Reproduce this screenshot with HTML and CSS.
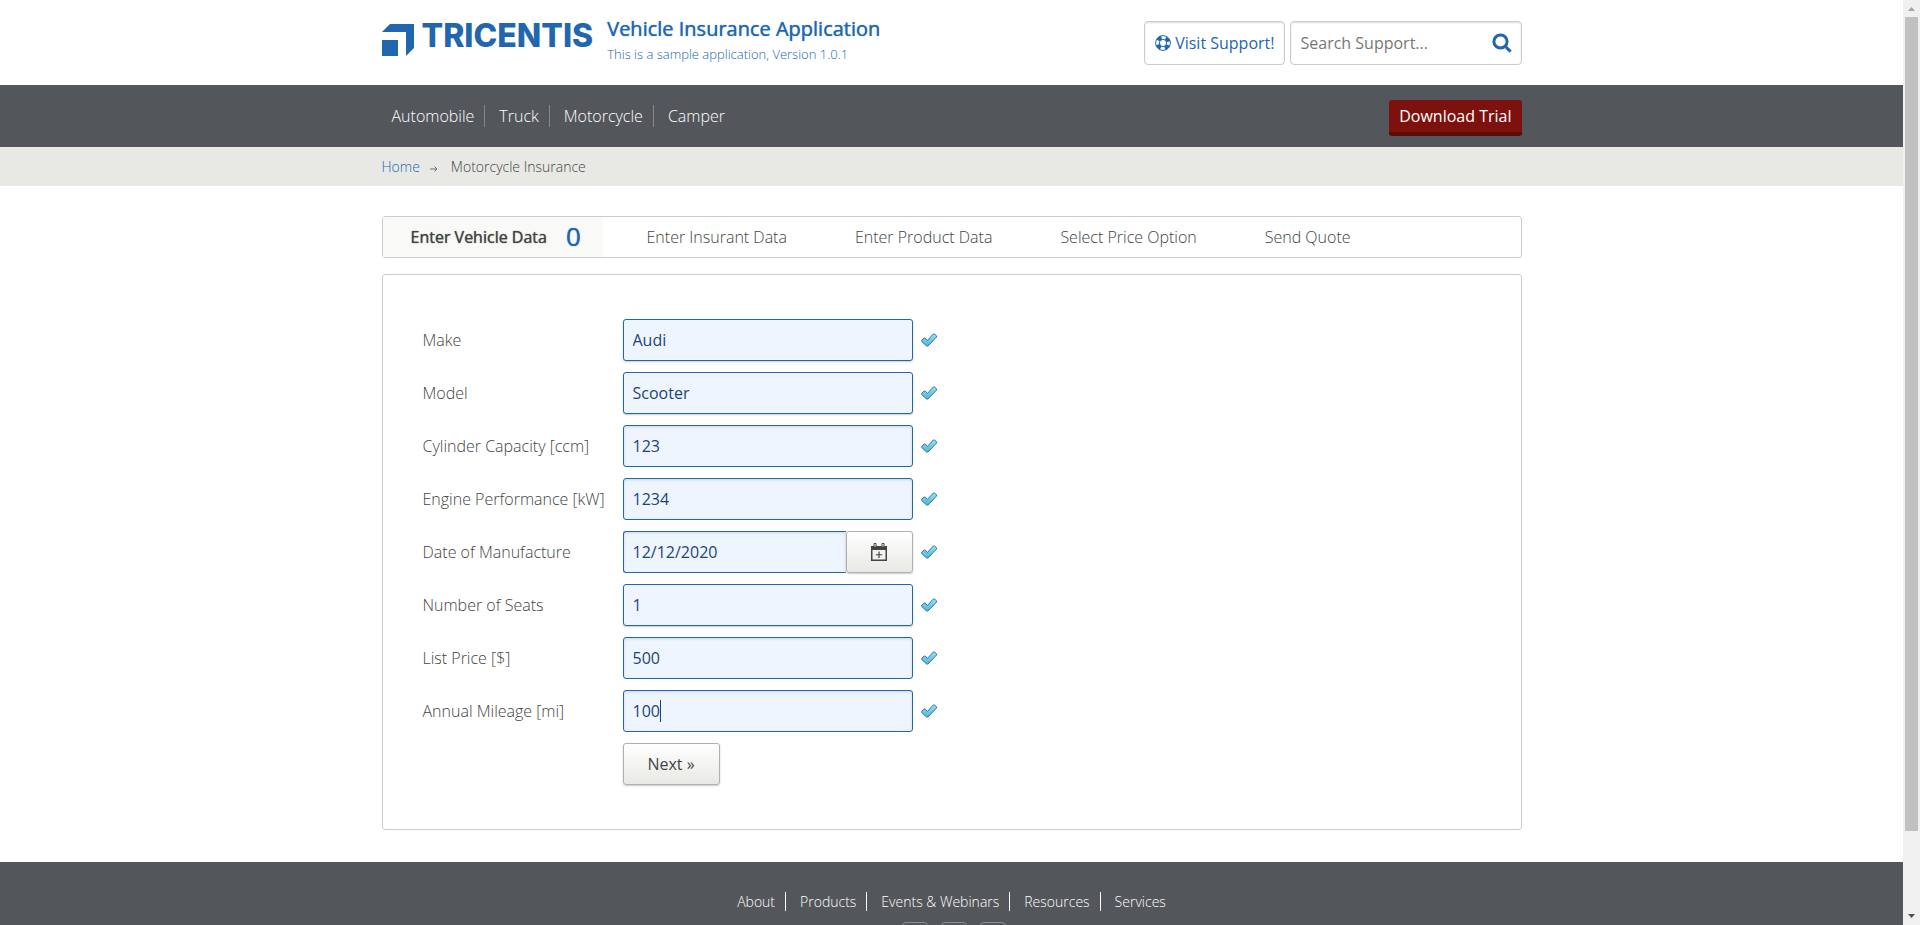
FILE: index.html
```html
<!DOCTYPE html>
<html lang="en">
<head>
<meta charset="utf-8">
<title>Enter Vehicle Data</title>
<link rel="stylesheet" href="styles.css">
</head>
<body>
<svg class="defs" aria-hidden="true">
  <defs>
    <linearGradient id="tick-fill" x1="0" y1="0" x2="0" y2="1">
      <stop offset="0" stop-color="#9be0fa"/><stop offset="1" stop-color="#4fb3dd"/>
    </linearGradient>
    <symbol id="tick" viewBox="0 0 16 16">
      <path d="M.7 8.300 3.200 6h1l2.200 2.500L12.300 2h1.200L15.500 3.800v1.200L7 14H5.600L.7 9.500z" fill="url(#tick-fill)" stroke="#2d779e" stroke-width="1" stroke-linejoin="round"/>
    </symbol>
  </defs>
</svg>
<div class="window">
  <div class="page">
    <header class="header wrap">
      <a class="logo" href="#">
        <svg class="logo-mark" viewBox="0 0 32 32" aria-hidden="true"><path d="M8 0H32V24L24 32V8H0zM0 16H16V32H0z" fill="#2266b0"/></svg>
        <span class="logo-text">TRICENTIS</span>
      </a>
      <div class="title">
        <h1>Vehicle Insurance Application</h1>
        <p>This is a sample application, Version 1.0.1</p>
      </div>
      <a class="support" href="#">
        <svg class="ring" viewBox="0 0 16 16" aria-hidden="true"><g fill="none" stroke="#2266b0"><circle cx="8" cy="8" r="7.4"/><circle cx="8" cy="8" r="3.6"/><circle cx="8" cy="8" r="5.5" stroke-width="3.8" stroke-dasharray="4.32 4.32" stroke-dashoffset="-2.16"/></g></svg>
        <span>Visit Support!</span>
      </a>
      <form class="search">
        <input type="text" placeholder="Search Support..." aria-label="Search Support">
        <button type="button" aria-label="Search"><svg viewBox="0 0 20 20" aria-hidden="true"><g fill="none" stroke="#2266b0" stroke-width="3"><circle cx="8.5" cy="8.5" r="6.6"/><path d="M13.2 13.2 18.6 18.6"/></g></svg></button>
      </form>
    </header>
    <nav class="nav">
      <div class="wrap nav-row">
        <ul class="menu">
          <li><a href="#">Automobile</a></li><li><a href="#">Truck</a></li><li><a href="#">Motorcycle</a></li><li><a href="#">Camper</a></li>
        </ul>
        <a class="trial" href="#">Download Trial</a>
      </div>
    </nav>
    <div class="crumbs">
      <div class="wrap crumb-row">
        <a href="#">Home</a>
        <svg class="arrow" viewBox="0 0 8 6" aria-hidden="true"><path d="M0 3H7M4.5 .5 7 3 4.5 5.5" fill="none" stroke="#6c7074"/></svg>
        <span>Motorcycle Insurance</span>
      </div>
    </div>
    <main class="wrap main">
      <ul class="steps">
        <li class="active"><a href="#">Enter Vehicle Data</a><span class="count">0</span></li>
        <li><a href="#">Enter Insurant Data</a></li>
        <li><a href="#">Enter Product Data</a></li>
        <li><a href="#">Select Price Option</a></li>
        <li><a href="#">Send Quote</a></li>
      </ul>
      <form class="panel">
        <div class="row"><label for="make">Make</label><select class="field" id="make"><option>Audi</option></select><svg class="tick" aria-hidden="true"><use href="#tick"/></svg></div>
        <div class="row"><label for="model">Model</label><select class="field" id="model"><option>Scooter</option></select><svg class="tick" aria-hidden="true"><use href="#tick"/></svg></div>
        <div class="row"><label for="capacity">Cylinder Capacity [ccm]</label><input class="field" id="capacity" type="text" value="123"><svg class="tick" aria-hidden="true"><use href="#tick"/></svg></div>
        <div class="row"><label for="power">Engine Performance [kW]</label><input class="field" id="power" type="text" value="1234"><svg class="tick" aria-hidden="true"><use href="#tick"/></svg></div>
        <div class="row"><label for="date">Date of Manufacture</label>
          <div class="date"><input class="field" id="date" type="text" value="12/12/2020"><button class="button" type="button" aria-label="Open calendar"><svg class="calendar" viewBox="0 0 16 18" aria-hidden="true"><path d="M0 3H16V18H0zM1.500 7V16.500H14.500V7z" fill="#444" fill-rule="evenodd"/><path d="M3 .5H5V4H3zM11 .5H13V4H11z" fill="#fff" stroke="#444"/><path d="M8 8.500V15M4.800 11.750H11.200" stroke="#444" stroke-width="1.200"/></svg></button></div>
          <svg class="tick" aria-hidden="true"><use href="#tick"/></svg></div>
        <div class="row"><label for="seats">Number of Seats</label><select class="field" id="seats"><option>1</option></select><svg class="tick" aria-hidden="true"><use href="#tick"/></svg></div>
        <div class="row"><label for="price">List Price [$]</label><input class="field" id="price" type="text" value="500"><svg class="tick" aria-hidden="true"><use href="#tick"/></svg></div>
        <div class="row"><label for="mileage">Annual Mileage [mi]</label><div class="focused"><input class="field" id="mileage" type="text" value="100"><span class="caret"></span></div><svg class="tick" aria-hidden="true"><use href="#tick"/></svg></div>
        <div class="row"><button class="button next" type="button">Next »</button></div>
      </form>
    </main>
    <footer class="footer">
      <ul class="menu links">
        <li><a href="#">About</a></li><li><a href="#">Products</a></li><li><a href="#">Events &amp; Webinars</a></li><li><a href="#">Resources</a></li><li><a href="#">Services</a></li>
      </ul>
      <div class="social"><a href="#" aria-label="Facebook"></a><a href="#" aria-label="Twitter"></a><a href="#" aria-label="LinkedIn"></a></div>
    </footer>
  </div>
  <div class="scrollbar" aria-hidden="true">
    <svg viewBox="0 0 17 17"><path d="M5 11 8.500 7 12 11z" fill="#a3a3a3"/></svg>
    <div class="thumb"></div>
    <svg viewBox="0 0 17 17"><path d="M5 6 8.500 10 12 6z" fill="#505050"/></svg>
  </div>
</div>
</body>
</html>
```
FILE: styles.css
```css
* { box-sizing: border-box; }
body {
  margin: 0;
  font: 300 16px/22px "Open Sans", "Noto Sans", sans-serif;
  color: #444;
  background: #fff;
}
a { color: inherit; text-decoration: none; }
ul { list-style: none; margin: 0; padding: 0; }
input, select, button { font: inherit; color: inherit; margin: 0; }
.defs { position: absolute; width: 0; height: 0; }

.window { display: flex; height: 100vh; }
.page { flex: 1; overflow-y: auto; scrollbar-width: none; }
.wrap { width: 100%; max-width: 1140px; margin: 0 auto; }

.header { display: flex; align-items: flex-start; padding: 21px 0 20px; color: #2266b0; }
.logo { display: flex; gap: 8px; padding-top: 3px; }
.logo-mark { width: 32px; height: 32px; }
.logo-text { font: 800 32px/24px Inter, "Open Sans", sans-serif; }
.title { flex: 1; margin: -4px 0 0 14px; }
h1 { margin: 0; font-size: 20px; line-height: 24px; font-weight: 400; text-shadow: 0 0 1px currentColor; }
.title p { margin: 4px 0 0; font-size: 13px; line-height: 18px; }
.support, .search {
  display: flex;
  align-items: center;
  height: 44px;
  border: 1px solid #ccc;
  border-radius: 4px;
  box-shadow: inset 0 1px 2px #ddd;
}
.support { gap: 4px; padding: 0 9px 0 10px; font-weight: 400; }
.ring { width: 16px; height: 16px; }
.search { width: 232px; margin-left: 5px; padding: 0 9px 0 10px; }
.search input { flex: 1; min-width: 0; padding: 0; border: 0; outline: 0; background: none; font-weight: 400; }
.search input::placeholder { color: #777; opacity: 1; }
.search button { display: flex; padding: 0; border: 0; background: none; }
.search svg { width: 20px; height: 20px; }

.nav, .footer { background: #53565a; color: #fff; }
.nav-row { display: flex; justify-content: space-between; align-items: flex-start; padding: 15px 0 11px; }
.menu { display: flex; gap: 4px; }
.menu li { padding: 0 10px; border-right: 1px solid #85878a; }
.menu li:last-child { border-right: 0; }
.nav .menu { margin-top: 5px; }
.trial { padding: 5px 10px; border-bottom: 4px solid #5a0b0a; border-radius: 3px; background: #7c110e; font-weight: 500; }
.crumbs { background: #e8e9e4; }
.crumb-row { display: flex; align-items: center; padding: 10px 0 9px; font-size: 14px; line-height: 20px; }
.crumb-row a { color: #2266b0; }
.arrow { width: 8px; height: 6px; margin: 4px 13px 0 10px; }

.main { padding: 30px 0 32px; }
.steps { display: flex; border: 1px solid #ccc; border-radius: 3px; line-height: 40px; white-space: nowrap; }
.steps li { padding: 0 34px; }
.steps .active { display: flex; gap: 19px; width: 220px; margin-right: 10px; padding: 0 20px 0 28px; background: #f9f9f7; font-weight: 400; }
.active a, .count { text-shadow: 0 0 1px currentColor; }
.count { font-size: 26px; font-weight: 400; line-height: 38px; height: 40px; color: #2266b0; }
.panel { display: grid; gap: 11px; margin-top: 16px; padding: 44px 40px; border: 1px solid #ccc; border-radius: 3px; }
.row { display: grid; grid-template-columns: 192px 290px 16px; column-gap: 8px; align-items: center; height: 42px; }
.field {
  width: 100%;
  height: 42px;
  padding: 0 9px;
  border: 1px solid #2266b0;
  border-radius: 3px;
  outline: 0;
  background: #eef5fe;
  color: #1d4477;
  font-weight: 400;
  appearance: none;
  box-shadow: inset 0 1px 3px #cdd6e2;
}
select.field { box-shadow: 0 1px 2px #ccc; }
.tick { width: 16px; height: 16px; }
.date { display: flex; }
.date .field { flex: 1; min-width: 0; border-right: 0; border-radius: 3px 0 0 3px; }
.date .button { width: 67px; }
.button {
  display: flex;
  justify-content: center;
  align-items: center;
  height: 42px;
  border: 1px solid #b0b0b0;
  border-radius: 3px;
  background: linear-gradient(#fff, #e8e9e4);
  box-shadow: 0 1px 2px #ccc;
  font-weight: 400;
}
.calendar { width: 16px; height: 18px; }
.next { grid-column: 2; width: 97px; }
.focused { position: relative; }
.caret { position: absolute; left: 37px; top: 10px; width: 1px; height: 22px; background: #1d4477; }

.footer { display: flex; flex-direction: column; align-items: center; padding: 30px 0 80px; }
.links { font-size: 14px; line-height: 19px; }
.links li { border-color: #fff; }
.social { display: flex; gap: 13px; margin-top: 11px; padding-left: 4px; }
.social a { width: 26px; height: 26px; border: 1px solid #8b8e91; border-radius: 4px; }

.scrollbar { display: flex; flex-direction: column; width: 17px; background: #f0f0f0; }
.scrollbar svg { flex: none; width: 17px; height: 17px; }
.thumb { flex: 1; margin: 0 2px 77px; background: #c1c1c1; }
```
